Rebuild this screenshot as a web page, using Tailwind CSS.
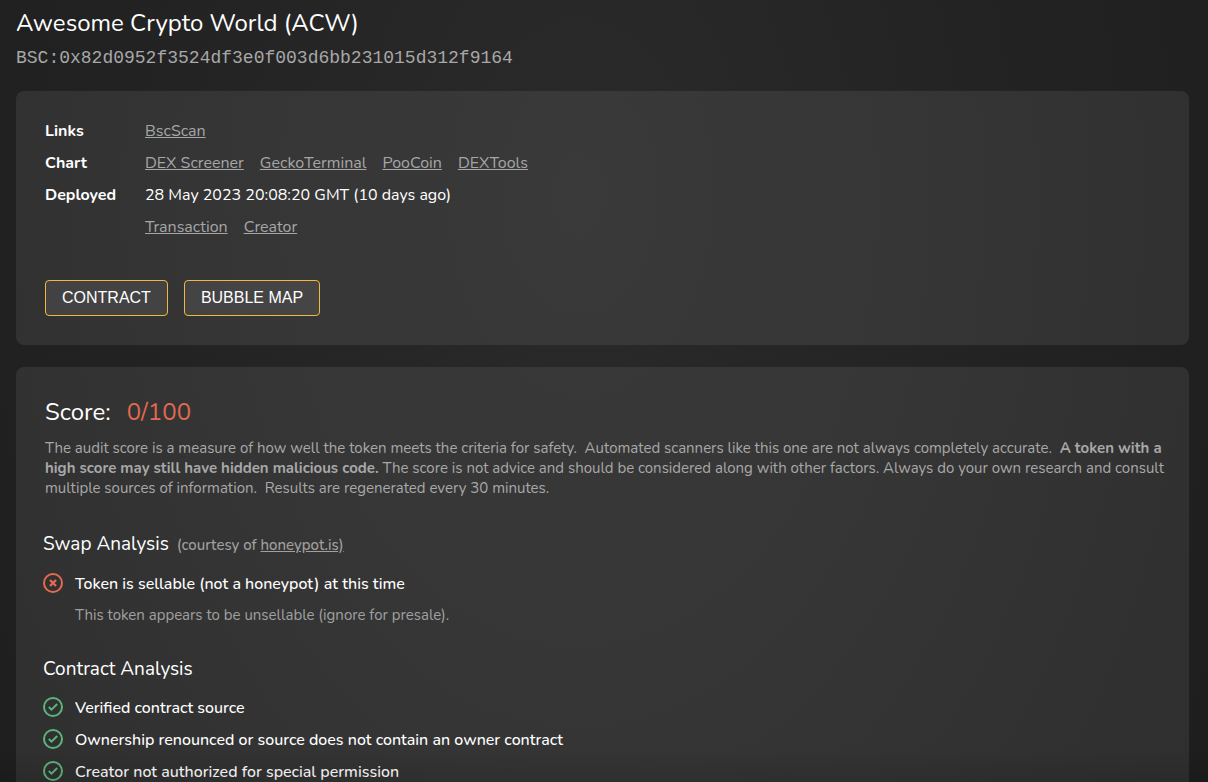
<!DOCTYPE html>
<html lang="en">
<head>
<meta charset="utf-8">
<meta name="viewport" content="width=device-width, initial-scale=1">
<title>Awesome Crypto World (ACW)</title>
<script src="https://cdn.jsdelivr.net/npm/@tailwindcss/browser@4"></script>
</head>
<body class="h-screen overflow-hidden bg-[#1e1e1e] bg-[radial-gradient(60%_140%_at_48%_25%,#2a2a2a_0%,#1e1e1e_100%)] font-['Nunito','Lato',sans-serif] text-base text-white">
<svg class="hidden" aria-hidden="true">
  <symbol id="fail" viewBox="0 0 20 20" fill="none" stroke="currentColor" stroke-width="2">
    <circle cx="10" cy="10" r="9"/>
    <path d="M7 7l6 6M13 7l-6 6" stroke-width="2.4"/>
  </symbol>
  <symbol id="pass" viewBox="0 0 20 20" fill="none" stroke="currentColor" stroke-width="2">
    <circle cx="10" cy="10" r="9"/>
    <path d="M5.8 10l2.7 2.7L14.2 7"/>
  </symbol>
</svg>
<main class="flex flex-col pr-[19px] pl-4">
  <header class="pt-2">
    <h1 class="text-2xl leading-[30px]">Awesome Crypto World (ACW)</h1>
    <p class="mt-2 font-['Liberation_Mono',monospace] text-lg leading-6 text-[#a8a8a8]">BSC:0x82d0952f3524df3e0f003d6bb231015d312f9164</p>
  </header>

  <section class="mt-[21px] rounded-lg bg-white/8 px-[29px] pt-6 pb-[29px]">
    <dl class="grid grid-cols-[100px_1fr] leading-8">
      <dt class="font-bold">Links</dt>
      <dd><a href="#" class="text-[#a6a6a6] underline">BscScan</a></dd>
      <dt class="font-bold">Chart</dt>
      <dd class="flex gap-4 text-[#a6a6a6]">
        <a href="#" class="underline">DEX Screener</a>
        <a href="#" class="underline">GeckoTerminal</a>
        <a href="#" class="underline">PooCoin</a>
        <a href="#" class="underline">DEXTools</a>
      </dd>
      <dt class="font-bold">Deployed</dt>
      <dd>28 May 2023 20:08:20 GMT (10 days ago)</dd>
      <dd class="col-start-2 flex gap-4 text-[#a6a6a6]">
        <a href="#" class="underline">Transaction</a>
        <a href="#" class="underline">Creator</a>
      </dd>
    </dl>
    <div class="mt-[37px] flex gap-4 font-['Liberation_Sans',sans-serif]">
      <button type="button" class="h-9 rounded border border-[#f0b93a] bg-white/8 px-4">CONTRACT</button>
      <button type="button" class="h-9 rounded border border-[#f0b93a] bg-white/8 px-4">BUBBLE MAP</button>
    </div>
  </section>

  <section class="mt-[22px] rounded-lg bg-white/8 pt-[29px] pr-5 pb-8 pl-[27px]">
    <h2 class="flex gap-4 pl-0.5 text-2xl leading-8"><span>Score:</span><span class="text-[#e26a50]">0/100</span></h2>
    <p class="mt-[10px] pl-0.5 text-[15px] leading-5 text-[#a8a8a8]">The audit score is a measure of how well the token meets the criteria for safety.&nbsp; Automated scanners like this one are not always completely accurate.&nbsp; <strong class="font-bold">A token with a high score may still have hidden malicious code.</strong> The score is not advice and should be considered along with other factors. Always do your own research and consult multiple sources of information.&nbsp; Results are regenerated every 30 minutes.</p>

    <div class="mt-[30px] flex items-baseline gap-2 leading-8">
      <h3 class="text-[19px] leading-8">Swap Analysis</h3>
      <span class="text-[15px] leading-8 font-medium text-[#a0a0a0]">(courtesy of <a href="#" class="underline">honeypot.is)</a></span>
    </div>
    <div class="mt-[7px] flex items-start gap-3 leading-8 font-medium"><svg class="mt-[5px] size-5 text-[#e26a50]"><use href="#fail"/></svg><span>Token is sellable (not a honeypot) at this time</span></div>
    <p class="pl-8 text-[15px] leading-[30px] text-[#a0a0a0]">This token appears to be unsellable (ignore for presale).</p>

    <h3 class="mt-[23px] text-[19px] leading-8">Contract Analysis</h3>
    <ul class="mt-[7px] leading-8 font-medium">
      <li class="flex items-start gap-3"><svg class="mt-[5px] size-5 text-[#5cb47c]"><use href="#pass"/></svg><span>Verified contract source</span></li>
      <li class="flex items-start gap-3"><svg class="mt-[5px] size-5 text-[#5cb47c]"><use href="#pass"/></svg><span>Ownership renounced or source does not contain an owner contract</span></li>
      <li class="flex items-start gap-3"><svg class="mt-[5px] size-5 text-[#5cb47c]"><use href="#pass"/></svg><span>Creator not authorized for special permission</span></li>
    </ul>
  </section>
</main>
<div class="pointer-events-none fixed inset-x-0 bottom-0 h-8 bg-linear-to-b from-transparent to-black/10"></div>
</body>
</html>
